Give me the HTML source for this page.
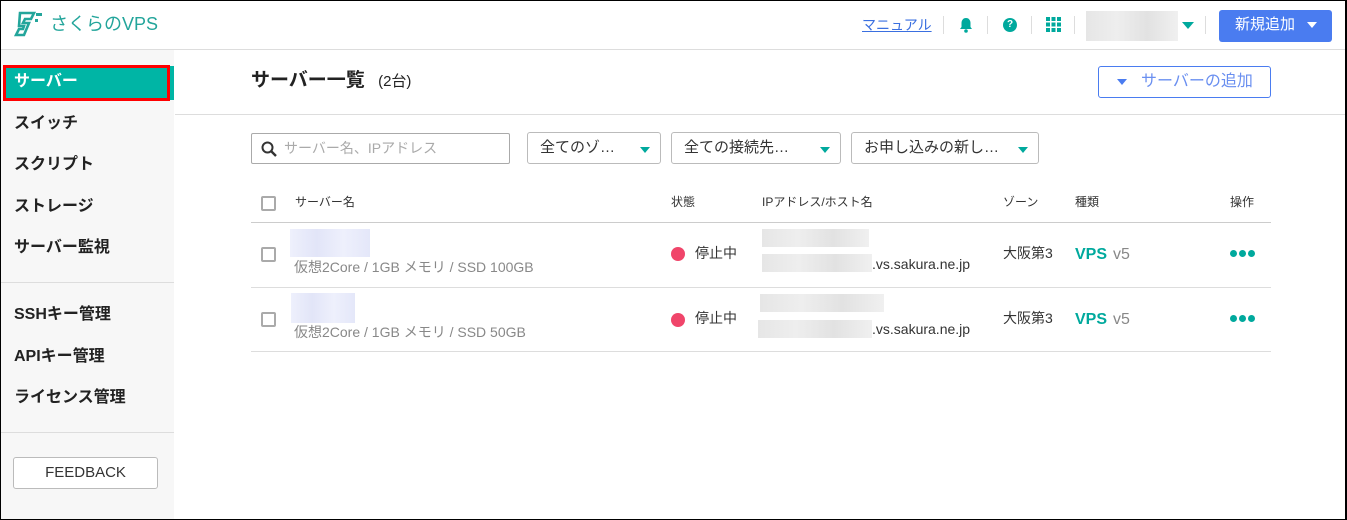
<!DOCTYPE html><html><head><meta charset="utf-8"><style>
*{box-sizing:border-box;margin:0;padding:0}
body{width:1347px;height:520px;overflow:hidden;background:#fff;font-family:"Liberation Sans","Noto Sans CJK JP",sans-serif;color:#222;position:relative;line-height:1.33}
.a{position:absolute}
.side{left:0;top:50px;width:174px;height:470px;background:#f7f7f7}
.nav{left:14px;font-size:16px;font-weight:bold;color:#222}
.blur{background:linear-gradient(90deg,#e6e6e6,#eee,#e2e2e2,#f0f0f0)}
.bl2{background:linear-gradient(90deg,#eef0fc,#e2e5f8,#eef0fc,#e4e7f9)}
.sel{border:1px solid #bbb;border-radius:3px;height:32px;top:132px;font-size:15px;padding:5px 12px;color:#333}
.sel:after{content:"";position:absolute;right:10px;top:14px;border:5px solid transparent;border-top:6px solid #00a99d;border-bottom:0}
.cb{width:15px;height:15px;border:2px solid #aaa;border-radius:2px;left:261px}
.th{top:195px;font-size:12px;color:#333}
.td{font-size:14px;color:#333}
.sub{font-size:14px;color:#888;left:294px}
.dot{width:14px;height:14px;border-radius:50%;background:#f0456a;left:671px}
.vps{left:1075px;font-size:16px;font-weight:bold;color:#00a99d}
.vps span{font-weight:normal;color:#888;margin-left:6px}
.ops{left:1230px;width:26px;height:8px}
.ops i{position:absolute;top:0;width:7px;height:7px;border-radius:50%;background:#00a99d}
.sep{width:1px;height:18px;background:#ddd;top:16px}
</style></head><body>
<svg class="a" style="left:14px;top:11px" width="34" height="26" viewBox="0 0 34 26"><path d="M6 2h14l-3 6h-6l-2 4h6l-5 12H2l3-6h4l1-3H5z" fill="none" stroke="#23a59b" stroke-width="2.6"/><rect x="22" y="2" width="6" height="3" fill="#23a59b"/><rect x="21" y="8" width="3" height="3" fill="#23a59b"/></svg>
<div class="a" style="left:50px;top:13px;font-size:18px;color:#23a59b">さくらのVPS</div>
<div class="a" style="left:862px;top:16px;font-size:14px;color:#3a6fe0;text-decoration:underline">マニュアル</div>
<div class="a sep" style="left:943px"></div>
<svg class="a" style="left:959px;top:17px" width="14" height="16" viewBox="0 0 14 16"><path d="M7 1c3 0 4.5 2.5 4.5 5v4l1.5 2H1l1.5-2V6C2.5 3.5 4 1 7 1z" fill="#00a99d"/><circle cx="7" cy="14" r="1.8" fill="#00a99d"/></svg>
<div class="a sep" style="left:987px"></div>
<div class="a" style="left:1003px;top:18px;width:14px;height:14px;border-radius:50%;background:#00a99d;color:#fff;font-size:10px;font-weight:bold;text-align:center;line-height:14px">?</div>
<div class="a sep" style="left:1031px"></div>
<svg class="a" style="left:1046px;top:17px" width="15" height="15"><g fill="#00a99d"><rect x="0" y="0" width="4" height="4"/><rect x="5.5" y="0" width="4" height="4"/><rect x="11" y="0" width="4" height="4"/><rect x="0" y="5.5" width="4" height="4"/><rect x="5.5" y="5.5" width="4" height="4"/><rect x="11" y="5.5" width="4" height="4"/><rect x="0" y="11" width="4" height="4"/><rect x="5.5" y="11" width="4" height="4"/><rect x="11" y="11" width="4" height="4"/></g></svg>
<div class="a sep" style="left:1074px"></div>
<div class="a blur" style="left:1086px;top:11px;width:92px;height:30px"></div>
<div class="a" style="left:1182px;top:22px;border:6px solid transparent;border-top:7px solid #00a99d;border-bottom:0"></div>
<div class="a sep" style="left:1205px"></div>
<div class="a" style="left:1219px;top:10px;width:113px;height:32px;background:#4a7cf0;border-radius:3px;color:#fff;font-size:15px;padding:5px 0 0 16px">新規追加<span style="display:inline-block;margin-left:12px;vertical-align:middle;border:5px solid transparent;border-top:6px solid #fff;border-bottom:0"></span></div>
<div class="a" style="left:0;top:49px;width:1347px;height:1px;background:#ddd"></div>
<div class="a side"></div>
<div class="a" style="left:3px;top:65px;width:167px;height:36px;border:3px solid #f00;background:#00b5a5"></div>
<div class="a" style="left:170px;top:66px;width:4px;height:34px;background:#00b5a5"></div>
<div class="a nav" style="top:71px;color:#fff">サーバー</div>
<div class="a nav" style="top:113px">スイッチ</div>
<div class="a nav" style="top:154px">スクリプト</div>
<div class="a nav" style="top:196px">ストレージ</div>
<div class="a nav" style="top:237px">サーバー監視</div>
<div class="a" style="left:0;top:282px;width:174px;height:1px;background:#ddd"></div>
<div class="a nav" style="top:304px">SSHキー管理</div>
<div class="a nav" style="top:346px">APIキー管理</div>
<div class="a nav" style="top:387px">ライセンス管理</div>
<div class="a" style="left:0;top:432px;width:174px;height:1px;background:#ddd"></div>
<div class="a" style="left:13px;top:457px;width:145px;height:32px;border:1px solid #bbb;border-radius:3px;background:#fff;text-align:center;font-size:15px;line-height:30px;color:#333">FEEDBACK</div>
<div class="a" style="left:251px;top:68px;font-size:19px;font-weight:bold">サーバー一覧 <span style="font-size:15px;font-weight:normal;margin-left:8px">(2台)</span></div>
<div class="a" style="left:1098px;top:66px;width:173px;height:32px;border:1px solid #4a7cf0;border-radius:3px;color:#6a8ff0;font-size:16px;padding:4px 0 0 18px"><span style="display:inline-block;vertical-align:middle;margin-right:14px;border:5px solid transparent;border-top:6px solid #4a7cf0;border-bottom:0"></span>サーバーの追加</div>
<div class="a" style="left:175px;top:114px;width:1170px;height:1px;background:#ddd"></div>
<div class="a" style="left:251px;top:133px;width:259px;height:31px;border:1px solid #aaa;border-radius:2px;font-size:14px;color:#aaa;padding:5px 0 0 32px">サーバー名、IPアドレス
<svg class="a" style="left:9px;top:7px" width="16" height="16"><circle cx="6.5" cy="6.5" r="5" fill="none" stroke="#333" stroke-width="2"/><path d="M10 10l5 5" stroke="#333" stroke-width="2.4"/></svg></div>
<div class="a sel" style="left:527px;width:134px">全てのゾ…</div>
<div class="a sel" style="left:671px;width:170px">全ての接続先…</div>
<div class="a sel" style="left:851px;width:188px">お申し込みの新し…</div>
<div class="a cb" style="top:196px"></div>
<div class="a th" style="left:295px">サーバー名</div>
<div class="a th" style="left:671px">状態</div>
<div class="a th" style="left:762px">IPアドレス/ホスト名</div>
<div class="a th" style="left:1003px">ゾーン</div>
<div class="a th" style="left:1075px">種類</div>
<div class="a th" style="left:1230px">操作</div>
<div class="a" style="left:251px;top:222px;width:1020px;height:1px;background:#ccc"></div>
<div class="a" style="left:251px;top:287px;width:1020px;height:1px;background:#ddd"></div>
<div class="a" style="left:251px;top:351px;width:1020px;height:1px;background:#ddd"></div>
<div class="a cb" style="top:247px"></div>
<div class="a bl2" style="left:290px;top:229px;width:80px;height:28px"></div>
<div class="a sub" style="top:258px">仮想2Core / 1GB メモリ / SSD 100GB</div>
<div class="a dot" style="top:247px"></div>
<div class="a td" style="left:695px;top:244px">停止中</div>
<div class="a blur" style="left:762px;top:229px;width:107px;height:18px"></div>
<div class="a blur" style="left:762px;top:254px;width:110px;height:18px"></div>
<div class="a td" style="left:872px;top:255px">.vs.sakura.ne.jp</div>
<div class="a td" style="left:1003px;top:244px">大阪第3</div>
<div class="a vps" style="top:244px">VPS<span>v5</span></div>
<div class="a ops" style="top:250px"><i style="left:0"></i><i style="left:9px"></i><i style="left:18px"></i></div>
<div class="a cb" style="top:312px"></div>
<div class="a bl2" style="left:291px;top:293px;width:64px;height:30px"></div>
<div class="a sub" style="top:323px">仮想2Core / 1GB メモリ / SSD 50GB</div>
<div class="a dot" style="top:313px"></div>
<div class="a td" style="left:695px;top:309px">停止中</div>
<div class="a blur" style="left:760px;top:294px;width:124px;height:18px"></div>
<div class="a blur" style="left:758px;top:320px;width:114px;height:18px"></div>
<div class="a td" style="left:872px;top:320px">.vs.sakura.ne.jp</div>
<div class="a td" style="left:1003px;top:309px">大阪第3</div>
<div class="a vps" style="top:309px">VPS<span>v5</span></div>
<div class="a ops" style="top:315px"><i style="left:0"></i><i style="left:9px"></i><i style="left:18px"></i></div>
<div class="a" style="left:0;top:0;width:1347px;height:520px;border-top:1px solid #000;border-left:1px solid #000;border-right:2px solid #000;border-bottom:1px solid #000;pointer-events:none"></div>
</body></html>
